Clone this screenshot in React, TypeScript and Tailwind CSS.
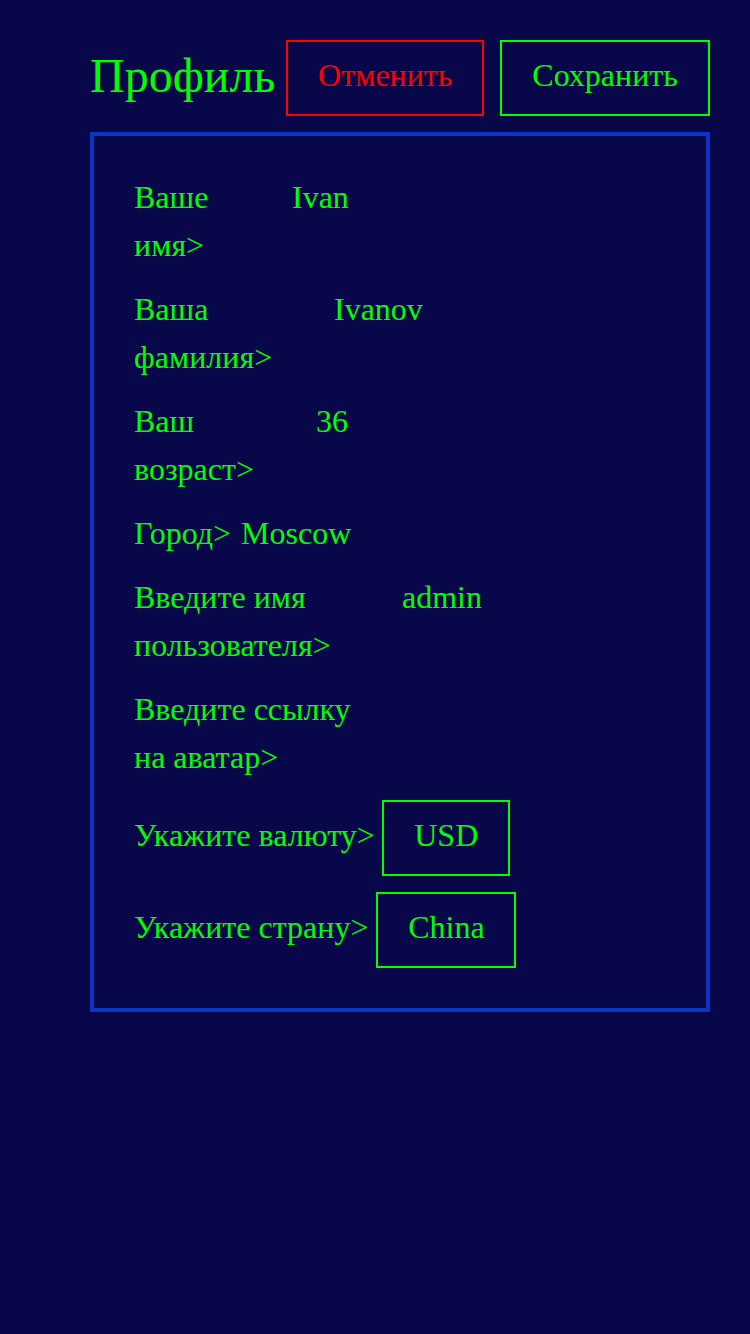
import React from "react";

/* -------------------- Data -------------------- */

type Field = { label: string; value?: string; labelW: string };

const fields: Field[] = [
  { label: "Ваше имя>", value: "Ivan", labelW: "w-[148px]" },
  { label: "Ваша фамилия>", value: "Ivanov", labelW: "w-[190px]" },
  { label: "Ваш возраст>", value: "36", labelW: "w-[172px]" },
  { label: "Город>", value: "Moscow", labelW: "w-auto" },
  { label: "Введите имя пользователя>", value: "admin", labelW: "w-[258px]" },
  { label: "Введите ссылку на аватар>", labelW: "w-[240px]" },
];

const selects = [
  { label: "Укажите валюту>", value: "USD", cls: "w-[128px] ml-[7px] pl-px" },
  { label: "Укажите страну>", value: "China", cls: "w-[140px] ml-2" },
];

/* -------------------- Page -------------------- */

export default function App() {
  return (
    <div
      className="min-h-[1334px] w-[750px] bg-[#08074a] text-[#00ff00] pt-10 pl-[90px]"
      style={{ fontFamily: '"Liberation Serif", "Times New Roman", serif' }}
    >
      {/* Header */}
      <div className="flex items-start h-[76px] w-[620px]">
        <h1 className="text-[48px] leading-[72px]">Профиль</h1>
        <button className="ml-[11px] border-2 border-[#ff0000] text-[#ff0000] text-[32px] leading-[48px] pt-[9px] pb-[15px] w-[198px]">
          Отменить
        </button>
        <button className="ml-4 border-2 border-[#00ff00] text-[#00ff00] text-[32px] leading-[48px] pt-[9px] pb-[15px] w-[210px]">
          Сохранить
        </button>
      </div>

      {/* Form card */}
      <div className="mt-4 w-[620px] border-4 border-[#0b35c6] pl-10 pt-[37px] pb-10 text-[32px] leading-[48px] flex flex-col gap-4">
        {fields.map((f) => (
          <div key={f.label} className="flex items-start gap-[10px]">
            <div className={f.labelW}>{f.label}</div>
            {f.value ? <div>{f.value}</div> : null}
          </div>
        ))}

        {selects.map((s, i) => (
          <div key={s.label} className={`flex items-start ${i === 0 ? "pt-[3px]" : ""}`}>
            <div className="mt-[11px]">{s.label}</div>
            <div className={`border-2 border-[#00ff00] pt-[9px] pb-[15px] text-center ${s.cls}`}>
              {s.value}
            </div>
          </div>
        ))}
      </div>
    </div>
  );
}
